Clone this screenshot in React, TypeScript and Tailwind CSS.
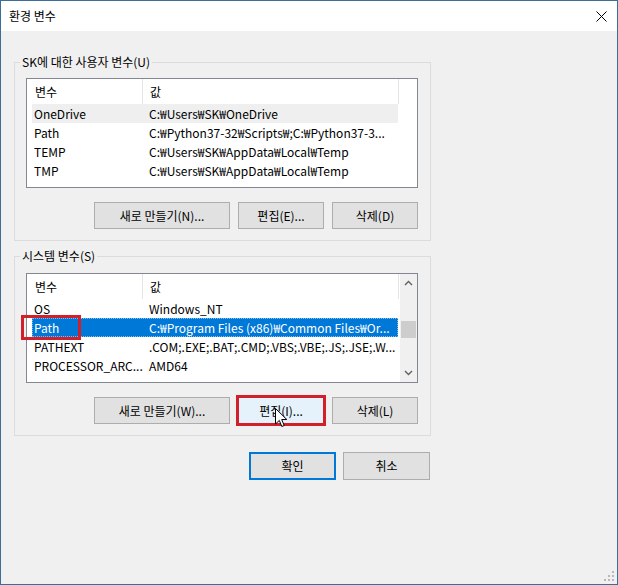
import React from 'react';

type Row = { name: string; value: string; selected?: 'focus' | 'inactive'; clipped?: boolean };

const userVars: Row[] = [
  { name: 'OneDrive', value: 'C:₩Users₩SK₩OneDrive', selected: 'inactive' },
  { name: 'Path', value: 'C:₩Python37-32₩Scripts₩;C:₩Python37-3...' },
  { name: 'TEMP', value: 'C:₩Users₩SK₩AppData₩Local₩Temp' },
  { name: 'TMP', value: 'C:₩Users₩SK₩AppData₩Local₩Temp' },
];

const systemVars: Row[] = [
  { name: 'OS', value: 'Windows_NT' },
  { name: 'Path', value: 'C:₩Program Files (x86)₩Common Files₩Or...', selected: 'focus' },
  { name: 'PATHEXT', value: '.COM;.EXE;.BAT;.CMD;.VBS;.VBE;.JS;.JSE;.W...' },
  { name: 'PROCESSOR_ARC...', value: 'AMD64' },
  { name: 'PROCESSOR_IDE...', value: 'Intel64 Family 6 Model 142 Stepping 9, G...', clipped: true },
];

function Header() {
  return (
    <div className="flex h-[25px] w-[367px] shrink-0 items-center bg-white">
      <div className="flex h-full w-[111px] items-center border-r border-[#e5e5e5] pl-[3px]">변수</div>
      <div className="flex h-full w-[256px] items-center border-r border-[#e5e5e5] pl-[7px]">값</div>
    </div>
  );
}

function ListRow({ row }: { row: Row }) {
  const base = 'flex h-[19px] w-[366px] shrink-0 items-center whitespace-nowrap';
  const tone =
    row.selected === 'focus'
      ? 'bg-[#0078d7] text-white outline-1 outline-dotted outline-[#ffffff80] -outline-offset-1'
      : row.selected === 'inactive'
        ? 'bg-[#efefef]'
        : '';
  return (
    <div className={`${base} ${tone} ${row.clipped ? 'pt-[6px] text-[#555]' : ''}`}>
      <div className="w-[111px] overflow-hidden pl-[2px]">{row.name}</div>
      <div className="w-[255px] overflow-hidden pl-[6px]">{row.value}</div>
    </div>
  );
}

function Chevron({ up }: { up?: boolean }) {
  return (
    <svg width="9" height="6" viewBox="0 0 9 6">
      <path
        d={up ? 'M1 5 L4.5 1.5 L8 5' : 'M1 1 L4.5 4.5 L8 1'}
        fill="none"
        stroke="#606060"
        strokeWidth="1.4"
      />
    </svg>
  );
}

function ListView({ rows, scroll }: { rows: Row[]; scroll?: boolean }) {
  return (
    <div className="flex h-[110px] w-[392px] overflow-hidden border border-[#828790] bg-white">
      <div className="flex flex-1 flex-col overflow-hidden pl-[5px]">
        <Header />
        {rows.map((r) => (
          <ListRow key={r.name} row={r} />
        ))}
      </div>
      {scroll && (
        <div className="flex w-[17px] shrink-0 flex-col items-center justify-between bg-[#f0f0f0] py-[6px]">
          <Chevron up />
          <div className="flex w-full flex-1 flex-col px-[1px] pt-[35px]">
            <div className="h-[17px] w-full bg-[#cdcdcd]" />
          </div>
          <Chevron />
        </div>
      )}
    </div>
  );
}

function Btn({
  children,
  w,
  className = '',
}: {
  children: React.ReactNode;
  w: string;
  className?: string;
}) {
  return (
    <div
      className={`flex h-[27px] items-center justify-center border border-[#adadad] bg-[#e1e1e1] ${w} ${className}`}
    >
      {children}
    </div>
  );
}

function Cursor() {
  return (
    <svg
      className="pointer-events-none absolute left-[37px] top-[11px]"
      width="13"
      height="20"
      viewBox="0 0 13 20"
    >
      <path
        d="M0.5 0.5 L0.5 16 L4.3 12.4 L6.8 18.5 L9.2 17.5 L6.7 11.5 L11.8 11.5 Z"
        fill="#fff"
        stroke="#000"
        strokeWidth="1"
        strokeLinejoin="miter"
      />
    </svg>
  );
}

export default function App() {
  return (
    <div className="relative flex h-[585px] w-[618px] flex-col border border-[#3b6e99] bg-[#f0f0f0] font-['Noto_Sans_CJK_KR',sans-serif] text-[12px] text-black">
      {/* title bar */}
      <div className="flex h-[30px] shrink-0 items-center justify-between bg-white pl-[8px] pr-[10px]">
        <span>환경 변수</span>
        <svg width="11" height="11" viewBox="0 0 11 11">
          <path d="M0.5 0.5 L10.5 10.5 M10.5 0.5 L0.5 10.5" stroke="#000" strokeWidth="1" />
        </svg>
      </div>

      <div className="flex flex-col px-[13px] pt-[23px]">
        {/* user variables */}
        <fieldset className="w-[417px] border border-[#dcdcdc] px-[11px] pb-[11px] pt-[8px]">
          <legend className="-ml-[6px] px-[2px] leading-[16px]">SK에 대한 사용자 변수(U)</legend>
          <ListView rows={userVars} />
          <div className="mt-[14px] flex justify-end gap-[8px] pr-[1px]">
            <Btn w="w-[136px]">새로 만들기(N)...</Btn>
            <Btn w="w-[86px]">편집(E)...</Btn>
            <Btn w="w-[86px]">삭제(D)</Btn>
          </div>
        </fieldset>

        {/* system variables */}
        <fieldset className="mt-[7px] w-[417px] border border-[#dcdcdc] px-[11px] pb-[11px] pt-[9px]">
          <legend className="-ml-[6px] px-[2px] leading-[16px]">시스템 변수(S)</legend>
          <div className="relative">
            <ListView rows={systemVars} scroll />
            <div className="pointer-events-none absolute left-[-5px] top-[42px] h-[25px] w-[60px] border-[3px] border-[#d11f2b]" />
          </div>
          <div className="mt-[14px] flex justify-end gap-[8px] pr-[1px]">
            <Btn w="w-[136px]">새로 만들기(W)...</Btn>
            <div className="relative">
              <Btn
                w="w-[86px]"
                className="border-[#0078d7] bg-[#e5f1fb] outline-[3px] outline-solid outline-[#d11f2b] outline-offset-[-1px]"
              >
                편집(I)...
              </Btn>
              <Cursor />
            </div>
            <Btn w="w-[86px]">삭제(L)</Btn>
          </div>
        </fieldset>

        {/* dialog buttons */}
        <div className="mt-[16px] flex w-[417px] justify-end gap-[7px] pr-[1px]">
          <div className="flex h-[28px] w-[87px] items-center justify-center border-2 border-[#0078d7] bg-[#e1e1e1]">
            확인
          </div>
          <div className="flex h-[28px] w-[87px] items-center justify-center border border-[#adadad] bg-[#e1e1e1]">
            취소
          </div>
        </div>
      </div>

      {/* size grip */}
      <svg className="absolute bottom-[2px] right-[2px]" width="12" height="12" viewBox="0 0 12 12">
        <g fill="#b8b8b8">
          <rect x="9" y="1" width="2" height="2" />
          <rect x="5" y="5" width="2" height="2" />
          <rect x="9" y="5" width="2" height="2" />
          <rect x="1" y="9" width="2" height="2" />
          <rect x="5" y="9" width="2" height="2" />
          <rect x="9" y="9" width="2" height="2" />
        </g>
      </svg>
    </div>
  );
}
